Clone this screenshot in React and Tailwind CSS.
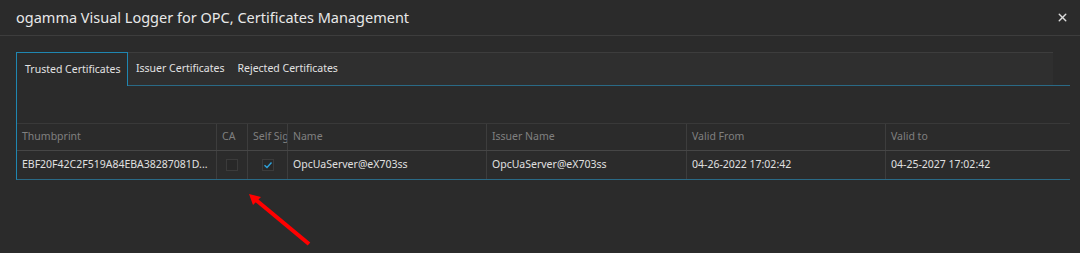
import { X } from 'lucide-react';

const columns = [
    { key: 'thumb', label: 'Thumbprint' },
    { key: 'ca', label: 'CA' },
    { key: 'self', label: 'Self Signed' },
    { key: 'name', label: 'Name' },
    { key: 'issuer', label: 'Issuer Name' },
    { key: 'from', label: 'Valid From' },
    { key: 'to', label: 'Valid to' },
];

const row = {
    thumb: 'EBF20F42C2F519A84EBA38287081D...',
    ca: false,
    self: true,
    name: 'OpcUaServer@eX703ss',
    issuer: 'OpcUaServer@eX703ss',
    from: '04-26-2022 17:02:42',
    to: '04-25-2027 17:02:42',
};

function CheckBox({ checked }) {
    return (
        <span className="w-[12px] h-[12px] border border-[#3b3b3b] bg-[#282828] flex items-center justify-center">
            {checked && (
                <svg width="10" height="10" viewBox="0 0 10 10">
                    <path d="M1.5 5.2 L4 7.5 L8.5 2.5" fill="none" stroke="#2ea3dc" strokeWidth="1.4" />
                </svg>
            )}
        </span>
    );
}

export default function App() {
    const grid = 'grid grid-cols-[200px_31px_40px_199px_200px_199px_1fr]';

    return (
        <div className="w-[1080px] h-[253px] bg-[#2b2b2b] relative overflow-hidden font-['Noto_Sans',sans-serif]">
            {/* title bar */}
            <div className="h-[36px] border-b border-[#3d3d3d] flex items-center justify-between pl-[16px] pr-[11px]">
                <span className="text-[14.5px] text-[#e8e8e8] leading-none">ogamma Visual Logger for OPC, Certificates Management</span>
                <X size={13} strokeWidth={2.6} className="text-[#dcdcdc]" />
            </div>

            {/* certificates panel */}
            <div className="pl-[16px] pr-[10px] pt-[16px]">
                <div className="border-l border-b border-l-[#1f86b1] border-b-[#2a6a86]">
                    {/* tabs */}
                    <div className="h-[34px] flex text-[10.5px] text-[#e2e2e2]">
                        <div className="w-[111px] border-t border-r border-[#1f86b1] flex items-center pl-[8px] whitespace-nowrap">Trusted Certificates</div>
                        <div className="flex-1 border-b border-[#2a6a86] flex">
                            <div className="flex-1 mr-[17px] bg-[#2f2f2f] border-t border-[#3d3d3d] flex items-center">
                                <span className="pl-[8px] pr-[13px]">Issuer Certificates</span>
                                <span>Rejected Certificates</span>
                            </div>
                        </div>
                    </div>

                    <div className="h-[37px]" />

                    {/* table */}
                    <div className="text-[10.5px]">
                        <div className={`${grid} h-[28px] border-t border-[#393939] border-b border-b-[#464646] text-[#808080]`}>
                            {columns.map((c, i) => (
                                <div key={c.key} className={`flex items-center pl-[5px] overflow-hidden whitespace-nowrap ${i < columns.length - 1 ? 'border-r border-[#3d3d3d]' : ''}`}>
                                    {c.label}
                                </div>
                            ))}
                        </div>
                        <div className={`${grid} h-[28px] text-[#e0e0e0]`}>
                            {columns.map((c, i) => (
                                <div key={c.key} className={`flex items-center overflow-hidden whitespace-nowrap ${i < columns.length - 1 ? 'border-r border-[#3d3d3d]' : ''} ${c.key === 'ca' || c.key === 'self' ? 'justify-center' : 'pl-[5px]'}`}>
                                    {c.key === 'ca' || c.key === 'self' ? <CheckBox checked={row[c.key]} /> : row[c.key]}
                                </div>
                            ))}
                        </div>
                    </div>
                </div>
            </div>

            {/* red annotation arrow */}
            <svg className="absolute left-[240px] top-[185px]" width="80" height="68" viewBox="0 0 80 68">
                <line x1="69" y1="59" x2="16" y2="15" stroke="#ff0000" strokeWidth="4" />
                <polygon points="9,9 21,12 13,20" fill="#ff0000" />
            </svg>
        </div>
    );
}
